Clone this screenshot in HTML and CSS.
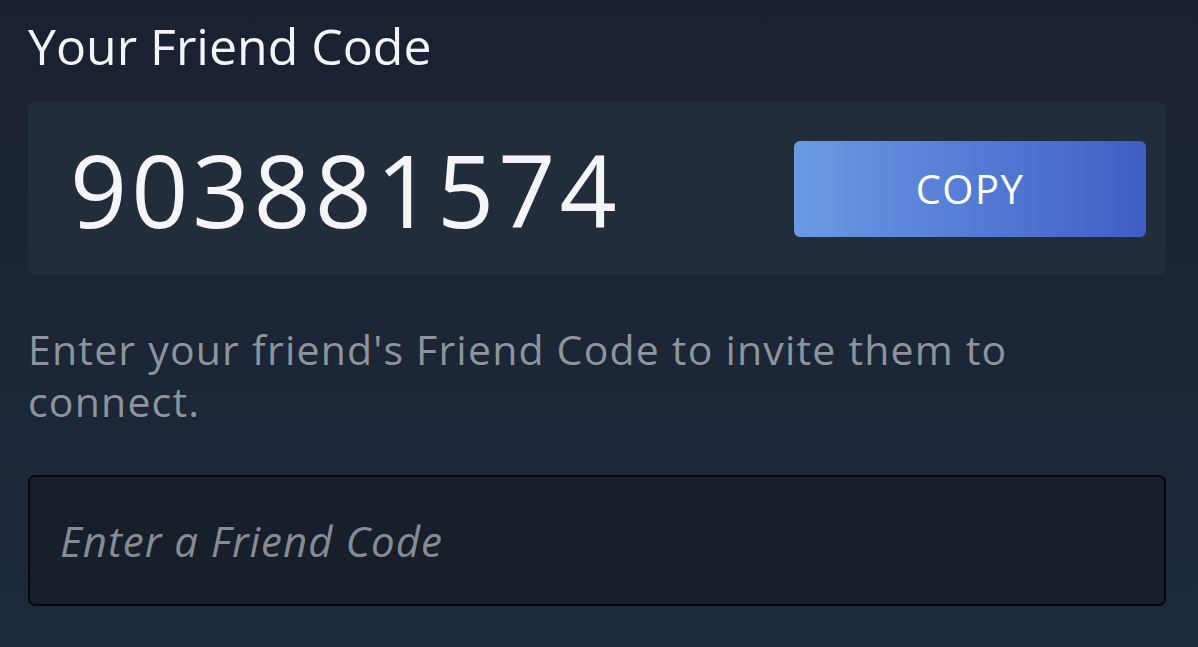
FILE: index.html
```html
<!DOCTYPE html>
<html lang="en">
<head>
    <meta charset="UTF-8">
    <meta name="viewport" content="width=device-width, initial-scale=1.0">
    <title>Friend Code</title>
    <link rel="stylesheet" href="styles.css">
</head>
<body>
    <div class="panel">
        <h1 class="title">Your Friend Code</h1>

        <div class="code-card">
            <div class="code-value">903881574</div>
            <button class="copy-button">COPY</button>
        </div>

        <p class="hint">Enter your friend's Friend Code to invite them to connect.</p>

        <input type="text" class="code-input" placeholder="Enter a Friend Code" />
    </div>
</body>
</html>
```

FILE: styles.css
```css
html, body {
    height: 100%;
}

body {
    font-family: "Open Sans", "Noto Sans", sans-serif;
    background: linear-gradient(to bottom, #1a2131 0%, #1b2536 45%, #1d2a3b 100%);
    color: white;
    margin: 0;
    padding: 0;
}

.panel {
    padding: 0 32px 0 28px;
}

.title {
    font-size: 50px;
    font-weight: 400;
    line-height: 66px;
    margin: 0;
    padding-top: 13px;
    color: #f2f4f7;
}

.code-card {
    margin-top: 23px;
    height: 173px;
    background: #222d3c;
    border-radius: 7px;
    display: flex;
    align-items: center;
    justify-content: space-between;
    padding: 0 20px 0 42px;
    box-sizing: border-box;
}

.code-value {
    font-size: 100px;
    line-height: 1;
    letter-spacing: 4px;
    color: #f4f5f7;
}

.copy-button {
    width: 352px;
    height: 96px;
    border: none;
    border-radius: 6px;
    background: linear-gradient(to right, #6a9be4, #3f5ec6);
    color: white;
    font-family: "Open Sans", "Noto Sans", sans-serif;
    font-size: 40px;
    letter-spacing: 1.5px;
    cursor: pointer;
}

.hint {
    margin: 48px 0 0 0;
    font-size: 41px;
    line-height: 52px;
    letter-spacing: 1.2px;
    color: #8d949c;
}

.code-input {
    display: block;
    margin-top: 48px;
    width: 100%;
    height: 131px;
    box-sizing: border-box;
    background: #171f2b;
    border: 2px solid #06080b;
    border-radius: 7px;
    padding: 0 30px;
    font-family: "Open Sans", "Noto Sans", sans-serif;
    font-size: 42px;
    letter-spacing: 1px;
    color: white;
    outline: none;
}

.code-input::placeholder {
    color: #868c93;
    font-style: italic;
}
```
